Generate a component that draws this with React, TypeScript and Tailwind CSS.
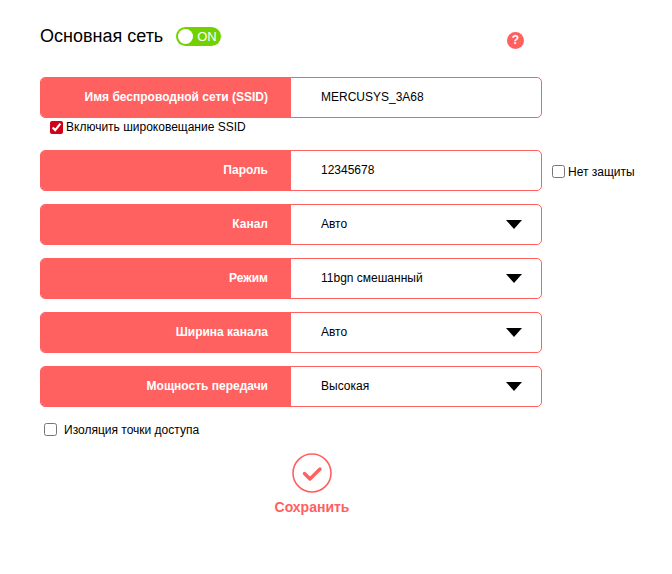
const rows = [
  { label: "Канал", value: "Авто" },
  { label: "Режим", value: "11bgn смешанный" },
  { label: "Ширина канала", value: "Авто" },
  { label: "Мощность передачи", value: "Высокая" },
];

function Field({ label, value, arrow }: { label: string; value: string; arrow?: boolean }) {
  return (
    <div className="flex h-[41px] w-[502px] overflow-hidden rounded-[5px] border border-[#ff6060] bg-white">
      <div className="flex w-[250px] shrink-0 items-center justify-end bg-[#ff6060] pb-[2px] pr-[23px] text-[12px] font-bold text-white">
        {label}
      </div>
      <div className="flex flex-1 items-center justify-between pb-[2px] pl-[30px] pr-[19px] text-[12px] text-black">
        <span>{value}</span>
        {arrow && (
          <svg width="16" height="9" viewBox="0 0 16 9" className="mt-[2px]">
            <path d="M0 0H16L8 9Z" fill="#000" />
          </svg>
        )}
      </div>
    </div>
  );
}

export default function App() {
  return (
    <div className="h-[574px] w-[672px] bg-white pl-[40px] pt-[25px] text-black" style={{ fontFamily: '"Liberation Sans", Arial, sans-serif' }}>
      {/* Header */}
      <div className="flex h-[22px] w-[502px] items-center">
        <h1 className="text-[18px] leading-[22px]">Основная сеть</h1>
        <div className="ml-[13px] flex h-[19px] w-[45px] items-center rounded-full bg-[#72d200] pl-[2px]">
          <div className="h-[15px] w-[15px] rounded-full bg-white" />
          <span className="ml-[4px] text-[13px] leading-none text-white">ON</span>
        </div>
        <div className="ml-auto mr-[18px] mt-[8px] flex h-[17px] w-[17px] items-center justify-center rounded-full bg-[#ff6060] text-[12px] font-bold leading-none text-white">
          ?
        </div>
      </div>

      <div className="mt-[30px]">
        <Field label="Имя беспроводной сети (SSID)" value="MERCUSYS_3A68" />
      </div>
      <label className="ml-[10px] mt-[3px] flex h-[13px] items-center text-[12px] leading-none">
        <input type="checkbox" defaultChecked className="m-0 mr-[3px] h-[13px] w-[13px] accent-[#d0021b]" />
        <span className="pb-[2px]">Включить широковещание SSID</span>
      </label>

      <div className="mt-[16px] flex items-center">
        <Field label="Пароль" value="12345678" />
        <label className="ml-[10px] mt-[2px] flex items-center text-[12px] leading-none">
          <input type="checkbox" className="m-0 mr-[3px] h-[13px] w-[13px]" />
          Нет защиты
        </label>
      </div>

      <div className="mt-[13px] flex flex-col gap-[13px]">
        {rows.map((r) => (
          <Field key={r.label} label={r.label} value={r.value} arrow />
        ))}
      </div>

      <label className="ml-[4px] mt-[16px] flex h-[13px] items-center text-[12px] leading-none">
        <input type="checkbox" className="m-0 mr-[7px] h-[13px] w-[13px]" />
        Изоляция точки доступа
      </label>

      {/* Save */}
      <div className="mt-[17px] flex w-[544px] flex-col items-center">
        <svg width="40" height="40" viewBox="0 0 40 40">
          <circle cx="20" cy="20" r="19" fill="none" stroke="#ff6060" strokeWidth="1.6" />
          <path d="M12.5 20.5L18 26L28 16" fill="none" stroke="#ff6060" strokeWidth="3.4" strokeLinecap="round" strokeLinejoin="round" />
        </svg>
        <span className="mt-[7px] text-[14px] font-bold leading-none text-[#ff6060]">Сохранить</span>
      </div>
    </div>
  );
}
